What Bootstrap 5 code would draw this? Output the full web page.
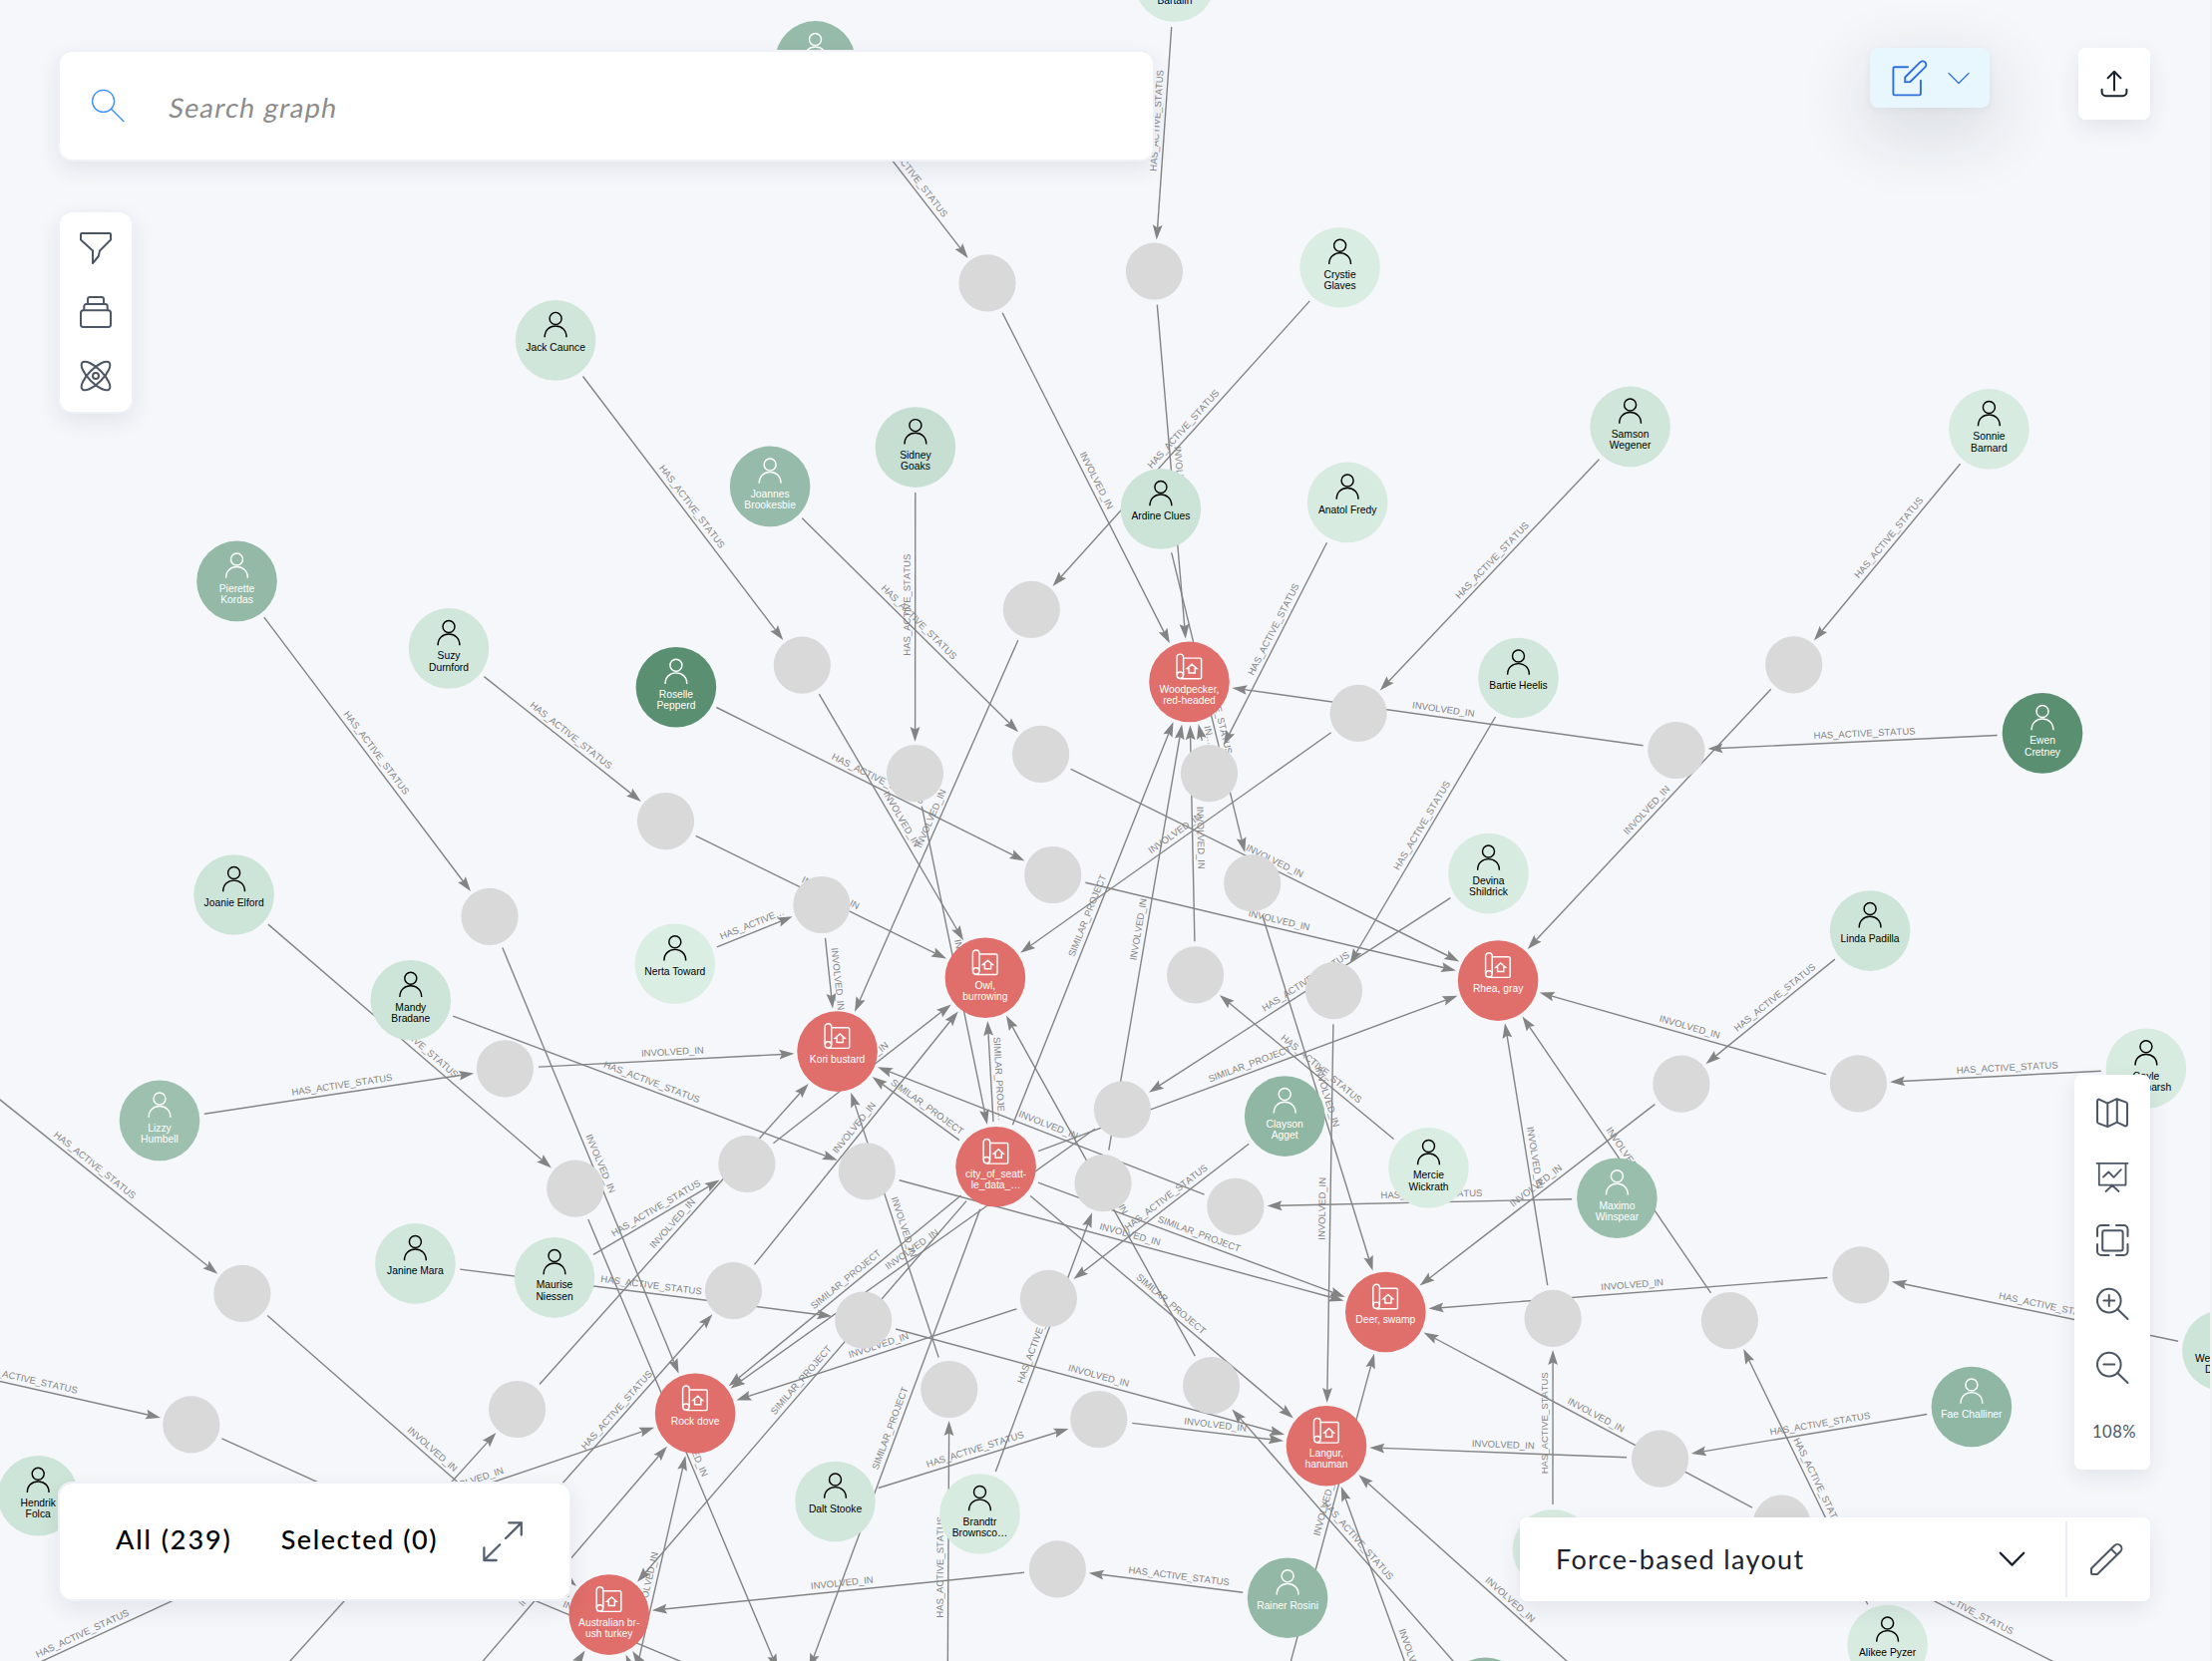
<!DOCTYPE html>
<html lang="en">
<head>
<meta charset="utf-8">
<meta name="viewport" content="width=device-width, initial-scale=1">
<title>Graph explorer</title>
<link href="https://cdn.jsdelivr.net/npm/bootstrap@5.3.0/dist/css/bootstrap.min.css" rel="stylesheet">
<style>
  body { background: #f5f7fb; font-family: Lato, "Noto Sans", sans-serif; color: #1b2230; }
  .stage { background: #f5f7fb; }
  .edge-strip { width: 2px; background: #f0f2f5; }
  .graph { font-family: "Liberation Sans", Arial, sans-serif; }
  .graph .edge line { stroke: #848484; stroke-width: 1.4; }
  .graph .edge path { fill: #848484; }
  .graph .edge text { fill: #858585; font-size: 9.5px; text-anchor: middle; font-kerning: none; }
  .graph .caption { font-size: 10.3px; text-anchor: middle; }
  .graph .glyph { fill: none; stroke-width: 1.45; }
  .overlay { padding: 48px 62px 60px 58px; pointer-events: none; }
  .overlay svg { fill: none; stroke: currentColor; stroke-width: 2; stroke-linecap: round; stroke-linejoin: round; display: block; flex: none; overflow: visible; }
  .pane { background: #fff; box-shadow: 0 8px 22px rgba(30, 45, 70, .09); }
  .pane-rim { border: 2px solid #eff1f6; background-clip: padding-box; border-radius: 14px; }
  .pane-sq { border-radius: 7px; }
  .search-pane { width: 1100px; height: 112px; margin-top: 2px; padding-left: 32px; }
  .search-pane svg { color: #3b8cff; stroke-width: 1.3; }
  .search-hint { display: inline-block; font-size: 27px; color: #8b8b8b; margin-left: 46px; padding-top: 4px; letter-spacing: 1.3px; transform: skewX(-10deg); }
  .tool-pane { width: 76px; height: 204px; margin-top: 49px; padding: 20px 0; color: #4d5665; }
  .mode-btn { width: 120px; height: 60px; background: #e8f7fe; color: #2f6fdc; border-radius: 8px; margin-right: 89px; padding: 0 21px 0 22px; box-shadow: 0 22px 68px 8px rgba(25, 30, 40, .12), 0 2px 8px rgba(25, 30, 40, .05); }
  .share-btn { width: 72px; height: 72px; }
  .zoom-pane { width: 76px; height: 396px; padding-top: 22px; color: #4d5665; margin-bottom: 48px; }
  .zoom-tools { gap: 32px; }
  .zoom-level { font-size: 16.5px; letter-spacing: .55px; margin-top: 37px; padding-left: 4px; line-height: 22px; }
  .count-pane { width: 515px; height: 120px; padding-left: 56px; color: #000; font-size: 27px; }
  .count-pane .tally { font-weight: 500; padding-bottom: 3px; letter-spacing: 1.55px; }
  .count-pane .tally-all { letter-spacing: 1.9px; margin-right: 49px; }
  .count-pane svg { color: #566171; margin-left: 45px; }
  .layout-pane { width: 632px; height: 84px; }
  .layout-pane > svg { margin-right: 41px; }
  .layout-name { font-size: 27px; letter-spacing: 1.35px; padding-left: 36px; }
  .layout-edit { width: 85px; height: 76px; border-left: 2px solid #eceef5; color: #4d5665; padding-right: 5px; }
</style>
</head>
<body>
<main class="stage position-relative vh-100 overflow-hidden">
  <svg class="graph position-absolute top-0 start-0" id="graph" width="2218" height="1666" viewBox="0 0 2218 1666" aria-label="Graph"></svg>
  <div class="edge-strip position-absolute top-0 end-0 h-100"></div>

  <div class="overlay position-absolute top-0 start-0 w-100 h-100 d-flex flex-column justify-content-between">
    <div class="d-flex justify-content-between align-items-start">
      <div class="d-flex flex-column">
        <div class="pane pane-rim search-pane d-flex align-items-center">
          <svg width="32" height="32"><circle cx="11.6" cy="11.4" r="11"/><path d="M19.4 19.2 32 31.8"/></svg>
          <span class="search-hint">Search graph</span>
        </div>
        <div class="pane pane-rim tool-pane d-flex flex-column align-items-center justify-content-between">
          <svg width="32" height="32"><path d="M2 1h28a1 1 0 0 1 1 1v5.5L20 18.5 18.8 24 13 31V18.5L1 7.5V2a1 1 0 0 1 1-1z"/></svg>
          <svg width="32" height="32"><rect x="1" y="14.3" width="30" height="16.8" rx="2.5"/><path d="M4.3 14V10.2A2.2 2.2 0 0 1 6.500 8h19a2.200 2.200 0 0 1 2.200 2.200V14M8 8V3.200A2.200 2.200 0 0 1 10.200 1h11.600A2.200 2.200 0 0 1 24 3.200V8"/></svg>
          <svg width="32" height="32"><g transform="rotate(45 16 16)"><ellipse cx="16" cy="16" rx="19" ry="7"/><ellipse cx="16" cy="16" rx="7" ry="19"/></g><circle cx="16" cy="16" r="3"/></svg>
        </div>
      </div>
      <div class="d-flex align-items-start">
        <div class="mode-btn d-flex align-items-center justify-content-between">
          <svg width="36" height="36"><path stroke-width="1.9" d="M16 7.200H2.800A1.400 1.400 0 0 0 1.400 8.600V34a1.400 1.400 0 0 0 1.400 1.400H27.500A1.400 1.400 0 0 0 28.900 34V20.700M13.200 22.400V17.500L28.300 2.400a3.500 3.500 0 0 1 5 0 3.500 3.500 0 0 1 0 5L18.400 22z"/></svg>
          <svg width="20" height="11"><path stroke-width="1.2" d="M0 .5 10 10.500 20 .5"/></svg>
        </div>
        <div class="pane pane-sq share-btn d-flex align-items-center justify-content-center">
          <svg width="32" height="32"><path d="M16 4v18.500M9.600 10.200 16 3.800l6.400 6.400M3.600 21.800v2.400a4 4 0 0 0 4 4h16.800a4 4 0 0 0 4-4v-2.400"/></svg>
        </div>
      </div>
    </div>

    <div class="d-flex justify-content-between align-items-end">
      <div class="pane pane-rim count-pane d-flex align-items-center">
        <span class="tally tally-all">All (239)</span>
        <span class="tally">Selected (0)</span>
        <svg width="40" height="40"><path stroke-width="2.300" d="M23 17 38.800 1.400M26.300 1.400H38.800V13.500M17.200 23.200 1.400 39M1.400 26.500V39H13.700"/></svg>
      </div>
      <div class="d-flex flex-column align-items-end">
        <div class="pane pane-sq zoom-pane d-flex flex-column align-items-center">
          <div class="d-flex flex-column zoom-tools">
            <svg width="32" height="32"><path d="M1 4.200a1.600 1.600 0 0 1 2.300-1.400L11.300 6.600 20.600 2.200 30 5.600a1.600 1.600 0 0 1 1 1.500V27.800a1.600 1.600 0 0 1-2.200 1.500l-8-3.600-9.500 4.400L2 26.600a1.600 1.600 0 0 1-1-1.500zM11.300 6.600V30M20.800 2.200V25.700"/></svg>
            <svg width="32" height="32"><path stroke-width="1.800" d="M.5 2.800h31M2.800 2.800V24.600H29.500V2.800M7 16.500l5.300-5 5.200 5.300 7.300-7.600M16 25l-6.500 6M16 25l6.500 6"/></svg>
            <svg width="32" height="32"><rect x="6.200" y="6.200" width="20.400" height="20.400" rx="2"/><path d="M1 12V5A4 4 0 0 1 5 1h7.500M20 1h7.500a4 4 0 0 1 4 4v7M31.500 20v7a4 4 0 0 1-4 4H20M12.500 31H5a4 4 0 0 1-4-4v-7"/></svg>
            <svg width="32" height="32"><circle cx="12.800" cy="12.600" r="11.800"/><path d="M21.200 21 31.500 31M7.300 12.600h11M12.800 7.100v11"/></svg>
            <svg width="32" height="32"><circle cx="12.800" cy="12.600" r="11.800"/><path d="M21.200 21 31.500 31M7.300 12.600h11"/></svg>
          </div>
          <span class="zoom-level">108%</span>
        </div>
        <div class="pane pane-sq layout-pane d-flex align-items-center">
          <span class="layout-name">Force-based layout</span>
          <svg class="ms-auto" width="25" height="14"><path stroke-width="2.300" d="M.8.800 12.500 12.600 24.200.800"/></svg>
          <div class="layout-edit d-flex align-items-center justify-content-center">
            <svg width="32" height="32"><path d="M1 25.200 24.200 2.200a4.300 4.300 0 0 1 6 0 4.300 4.300 0 0 1 0 6L7 31H2a1 1 0 0 1-1-1zM20.800 5.600l6 6"/></svg>
          </div>
        </div>
      </div>
    </div>
  </div>
</main>
<script>
// Nodes: id -> [x, y, kind or fill, caption lines]
const nodes = {
  top1: [817.5, 61.4, '#97bbaa', []], bart: [1177.9, -18.2, '#d7ebe0', ['', 'Bartalin']],
  jack: [557.1, 341.4, '#d1e6da', ['Jack Caunce']], crys: [1343.6, 268.2, '#d9ede2', ['Crystie', 'Glaves']],
  sidn: [917.9, 448.6, '#c7dfd2', ['Sidney', 'Goaks']], joan: [772.1, 487.9, '#96bbaa', ['Joannes', 'Brookesbie']],
  ardi: [1163.9, 510.4, '#cce4d7', ['Ardine Clues']], anat: [1351.1, 503.9, '#d7ebe0', ['Anatol Fredy']],
  sams: [1634.6, 427.9, '#d1e6da', ['Samson', 'Wegener']], sonn: [1994.4, 430.4, '#d7ebe0', ['Sonnie', 'Barnard']],
  pier: [237.5, 582.9, '#94b9a7', ['Pierette', 'Kordas']], suzy: [450, 650.4, '#d1e7db', ['Suzy', 'Durnford']],
  rose: [677.9, 689.3, '#5a8f72', ['Roselle', 'Pepperd']], barh: [1522.5, 680, '#d1e7db', ['Bartie Heelis']],
  ewen: [2048, 735.4, '#5a8f72', ['Ewen', 'Cretney']], devi: [1492.5, 876, '#d7ebe0', ['Devina', 'Shildrick']],
  elfo: [234.6, 897.5, '#cde5d8', ['Joanie Elford']], lind: [1875.1, 933.6, '#cde5d8', ['Linda Padilla']],
  mand: [411.8, 1003.2, '#cde5d8', ['Mandy', 'Bradane']], nert: [676.8, 966.8, '#daeee3', ['Nerta Toward']],
  lizz: [160, 1123.9, '#9dc0af', ['Lizzy', 'Humbell']], gayl: [2151.9, 1071.8, '#d7ebe0', ['Gayle', 'Titchmarsh']],
  clay: [1288.2, 1119.6, '#90b7a4', ['Clayson', 'Agget']], merc: [1432.5, 1171.4, '#d9ede2', ['Mercie', 'Wickrath']],
  maxi: [1621.4, 1201.7, '#9abeac', ['Maximo', 'Winspear']], jani: [416.4, 1267.4, '#d1e7db', ['Janine Mara']],
  maur: [556, 1281.4, '#d1e7db', ['Maurise', 'Niessen']], fae: [1976.9, 1411, '#90b7a4', ['Fae Challiner']],
  west: [2228.4, 1354.6, '#cde5d8', ['Westbrooke', 'Dansey']], hend: [38.2, 1500.3, '#cde5d8', ['Hendrik', 'Folca']],
  dalt: [837.5, 1506, '#d1e7db', ['Dalt Stooke']], bran: [982.5, 1518.5, '#d7ebe0', ['Brandtr', 'Brownsco…']],
  rain: [1291.1, 1602.8, '#93b9a6', ['Rainer Rosini']], hid1: [1557, 1554.2, '#d7ebe0', []],
  alik: [1892.6, 1650, '#d7ebe0', ['Alikee Pyzer']], bot1: [1489.3, 1702.8, '#93b9a6', []],
  off1: [-80, 1039, '#d7ebe0', []], off2: [-161, 1349, '#d7ebe0', []], off3: [949.8, 1772, '#d7ebe0', []],
  off4: [230.5, 1733, '#d7ebe0', []], off5: [499, 1561, '#d7ebe0', []], off6: [-102, 1733, '#d7ebe0', []],
  off7: [2142, 1709, '#d7ebe0', []],
  W: [1192.5, 683.9, 'project', ['Woodpecker,', 'red-headed']], O: [987.9, 980.7, 'project', ['Owl,', 'burrowing']],
  K: [839.6, 1054.6, 'project', ['Kori bustard']], R: [1502.1, 983.6, 'project', ['Rhea, gray']],
  S: [998.6, 1170.3, 'project', ['city_of_seatt-', 'le_data_…']], D: [1389.3, 1316, 'project', ['Deer, swamp']],
  L: [1330, 1450.3, 'project', ['Langur,', 'hanuman']], V: [697.1, 1417.8, 'project', ['Rock dove']],
  A: [610.7, 1619.6, 'project', ['Australian br-', 'ush turkey']], T: [796.5, 1714, 'project', []]
};
const statuses = [[990,283.9],[1157.5,272.1],[1034.3,611.4],[804.3,667.1],[917.5,775.7],[1043.6,756.4],[667.5,823.6],
  [1055.7,877.5],[823.9,907.5],[1362.1,715.4],[1212.5,775.7],[1680.9,752.5],[1798.7,666.8],[1255.7,885.7],[1198.6,977.9],
  [1337.5,993.6],[491,919.3],[506.4,1071.8],[1685.9,1087.1],[1863.4,1086.8],[1125.4,1112.8],[576.8,1192.1],[748.9,1167.4],
  [869.3,1174.9],[1106.1,1186.7],[1238.9,1210.3],[242.9,1297.4],[735.4,1294.6],[865.7,1324.2],[1051.4,1302.4],[951.8,1393.5],
  [191.8,1428.9],[518.6,1413.5],[1214.6,1389.6],[1101.8,1423.5],[1557.1,1322.4],[1865.9,1278.9],[1734.4,1324.6],
  [1664.6,1463.1],[1786.6,1528],[1060.4,1573.9],
  [397.4,1767.3],[254,1568],[382,1541],[1673.5,1757.9],[1480.3,1864.5],[1282.1,1711.4],[617.7,1764.5],[388.7,1951],[828,1955],[765.5,1988]];
statuses.forEach((p, i) => nodes['g' + (i + 1)] = [p[0], p[1], 'status', []]);

// Each group: label, its shift in reading direction, its shift in edge direction, the pairs
const links = [
  ['HAS_ACTIVE_STATUS', 8.25, 2.75, 'top1-g1 bart-g2 crys-g3 sams-g10 sonn-g13 anat-g11 jack-g4 joan-g6 sidn-g5 rose-g8 suzy-g7 pier-g17 ardi-g14 barh-g16 ewen-g12 devi-g21 lind-g19 gayl-g20 merc-g15 clay-g30 maxi-g26 elfo-g22 mand-g24 lizz-g18 jani-g29 maur-g23 west-g37 fae-g39 hid1-g36 alik-g38 rain-g41 dalt-g35 bran-g25 bot1-g34 off1-g27 off2-g32 off3-g31 off4-g33 off5-g28 off6-g43 off7-g40'],
  ['INVOLVED_IN', 5.7, -3.9, 'g1-W g2-W g3-K g4-O g5-S g6-R g7-O g8-R g9-K g10-O g12-W g13-R g14-D g15-W g16-L g17-V g18-K g19-D g20-R g21-V g22-T g23-O g24-D g25-W g26-K g27-A g28-O g29-L g30-V g31-K g32-A g33-K g34-O g35-L g36-R g37-D g38-R g39-L g40-D g41-A g42-V g43-V g44-T g45-L g46-L g47-D g48-V g49-A g50-A g51-A'],
  ['SIMILAR_PROJECT', 6.6, -0.6, 'S-R S-K S-W S-D S-L S-A S-T S-V'],
  ['HAS_ACTIVE…', 4.5, 2.75, 'nert-g9'],
  ['IN…', 5.7, -3.9, 'g11-W'],
  ['SIMILAR_PROJE…', 6.6, -0.6, 'S-O']
];
const radius = n => n[2] === 'status' ? 28.6 : 40.3;
const f = v => v.toFixed(1);
let edgeMarkup = '';
for (const [label, readShift, edgeShift, list] of links) {
  for (const pair of list.split(' ')) {
    const [a, b] = pair.split('-').map(k => nodes[k]);
    const len = Math.hypot(b[0] - a[0], b[1] - a[1]);
    const ux = (b[0] - a[0]) / len, uy = (b[1] - a[1]) / len;
    const s = radius(a) + 5, e = radius(b) + 3;
    const x1 = a[0] + ux * s, y1 = a[1] + uy * s, x2 = b[0] - ux * e, y2 = b[1] - uy * e;
    const flip = ux < 0 ? -1 : 1, rx = ux * flip, ry = uy * flip;
    // the label rides just above the line, always read left to right
    const shift = readShift + edgeShift * flip;
    const cx = (a[0] + b[0]) / 2 + rx * shift, cy = (a[1] + b[1]) / 2 + ry * shift;
    const deg = Math.atan2(uy, ux) * 180 / Math.PI, rdeg = Math.atan2(ry, rx) * 180 / Math.PI;
    edgeMarkup += `<g class="edge"><line x1="${f(x1)}" y1="${f(y1)}" x2="${f(x2 - ux * 12)}" y2="${f(y2 - uy * 12)}"/>` +
      `<path transform="translate(${f(x2)} ${f(y2)}) rotate(${f(deg)})" d="M0 0-15-4.900-12.500 0-15 4.900z"/>`;
    if (cy < 1720) edgeMarkup += `<text transform="translate(${f(cx)} ${f(cy)}) rotate(${rdeg.toFixed(2)})" y="-5">${label}</text>`;
    edgeMarkup += '</g>';
  }
}
const person = '<circle cx="0" cy="-22" r="6"/><path d="M-10.900-3.200C-10.900-10.200-6.200-14.400 0-14.400S10.900-10.200 10.900-3.200"/>';
const plan = '<path d="M-5.900-23.800H10.800a1.300 1.300 0 0 1 1.300 1.300V-4.500A1.300 1.300 0 0 1 10.800-3.200H-9.300M-5.900-6.800V-24.500a3.300 3.300 0 0 0-6.600 0V-6.800"/><circle cx="-9.200" cy="-6.700" r="3.200"/><path d="M-2.200-13.300 2.600-17.600 7.400-13.300H5.700V-9H-.500V-13.300z"/>';
let nodeMarkup = '';
for (const n of Object.values(nodes)) {
  const [x, y, kind, lines] = n;
  if (x < -60 || y > 1706.5) continue;
  const fill = kind === 'status' ? '#d9d9d9' : kind === 'project' ? '#e06e6b' : kind;
  let inner = `<circle r="${radius(n)}" fill="${fill}"/>`;
  if (kind !== 'status') {
    const dark = kind !== 'project' && parseInt(kind.slice(1, 3), 16) > 180;
    const ink = dark ? '#000' : '#fff';
    inner += `<g class="glyph" stroke="${ink}">${kind === 'project' ? plan : person}</g>`;
    lines.forEach((t, i) => { if (t) inner += `<text class="caption" fill="${ink}" y="${11 + i * 11.200}">${t}</text>`; });
  }
  nodeMarkup += `<g transform="translate(${x} ${y})">${inner}</g>`;
}
document.getElementById('graph').innerHTML = edgeMarkup + nodeMarkup;
</script>
<script src="https://cdn.jsdelivr.net/npm/bootstrap@5.3.0/dist/js/bootstrap.bundle.min.js"></script>
</body>
</html>
